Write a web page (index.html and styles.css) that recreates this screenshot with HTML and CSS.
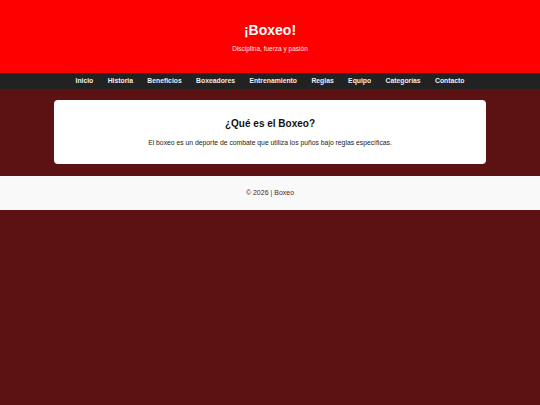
FILE: index.html
```html
<!DOCTYPE html>
<html lang="es">
<head>
<meta charset="utf-8">
<title>¡Boxeo!</title>
<link rel="stylesheet" href="styles.css">
</head>
<body>
<header class="site-header">
  <h1 class="site-title">¡Boxeo!</h1>
  <p class="site-tagline">Disciplina, fuerza y pasión</p>
</header>
<nav class="site-nav">
  <a href="#">Inicio</a>
  <a href="#">Historia</a>
  <a href="#">Beneficios</a>
  <a href="#">Boxeadores</a>
  <a href="#">Entrenamiento</a>
  <a href="#">Reglas</a>
  <a href="#">Equipo</a>
  <a href="#">Categorías</a>
  <a href="#">Contacto</a>
</nav>
<main class="content">
  <section class="card">
    <h2 class="card-title">¿Qué es el Boxeo?</h2>
    <p class="card-text">El boxeo es un deporte de combate que utiliza los puños bajo reglas específicas.</p>
  </section>
</main>
<footer class="site-footer">
  <p>© 2026 | Boxeo</p>
</footer>
</body>
</html>
```

FILE: styles.css
```css
html, body {
  margin: 0;
  padding: 0;
}
body {
  background: #5c1212;
  font-family: "Liberation Sans", Arial, sans-serif;
  color: #333;
}
.site-header {
  background: #ff0000;
  color: #fff;
  text-align: center;
  padding: 21.5px 0 20px;
}
.site-title {
  margin: 0;
  font-size: 14px;
  line-height: 16px;
  font-weight: bold;
}
.site-tagline {
  margin: 7.5px 0 0;
  font-size: 6.5px;
  line-height: 8px;
  color: #ffe5e5;
}
.site-nav {
  background: #222;
  height: 16px;
  display: flex;
  justify-content: center;
  align-items: center;
  gap: 14.4px;
}
.site-nav a {
  color: #eee;
  text-decoration: none;
  font-size: 6.8px;
  line-height: 8px;
  font-weight: bold;
}
.content {
  padding: 11px 0 12px;
}
.card {
  width: 80%;
  margin: 0 auto;
  background: #fff;
  border-radius: 4px;
  padding: 18px 10px 17px;
  box-sizing: border-box;
  text-align: center;
}
.card-title {
  margin: 0;
  font-size: 10px;
  line-height: 12px;
  color: #111;
}
.card-text {
  margin: 8.5px 0 0;
  font-size: 6.8px;
  line-height: 8px;
  color: #222;
}
.site-footer {
  background: #f9f9f9;
  text-align: center;
  height: 34px;
  display: flex;
  align-items: center;
  justify-content: center;
}
.site-footer p {
  margin: 0;
  font-size: 7px;
  line-height: 8px;
  color: #5c1a1a;
}
```
